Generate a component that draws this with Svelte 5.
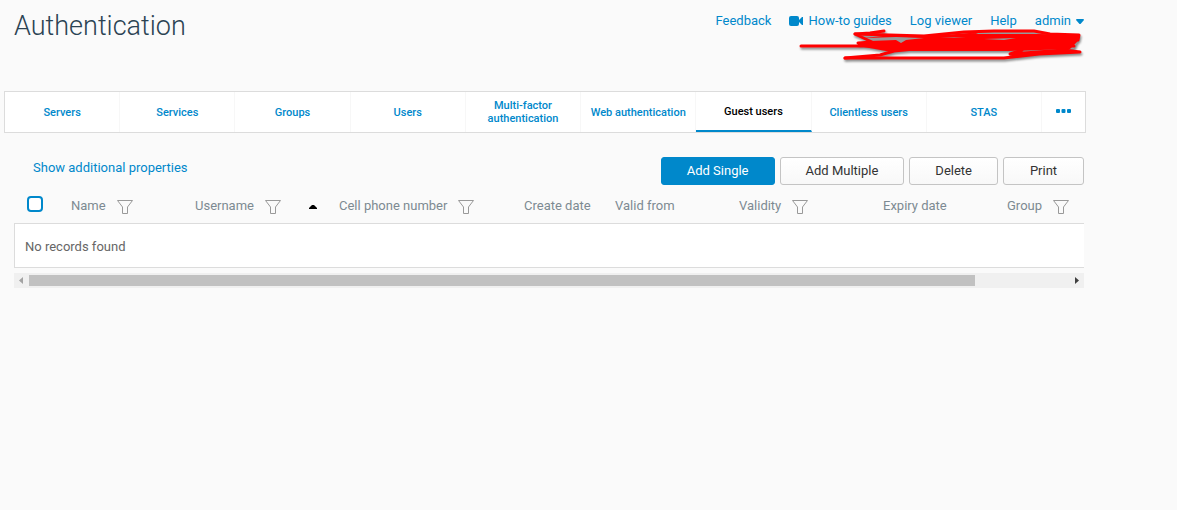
<script>
	const links = ['Feedback', 'How-to guides', 'Log viewer', 'Help'];

	const tabs = [
		'Servers',
		'Services',
		'Groups',
		'Users',
		'Multi-factor authentication',
		'Web authentication',
		'Guest users',
		'Clientless users',
		'STAS'
	];

	const columns = [
		{ label: 'Name', width: '124px', filter: true },
		{ label: 'Username', width: '144px', filter: true, sorted: true },
		{ label: 'Cell phone number', width: '185px', filter: true },
		{ label: 'Create date', width: '91px' },
		{ label: 'Valid from', width: '124px' },
		{ label: 'Validity', width: '144px', filter: true },
		{ label: 'Expiry date', width: '124px' },
		{ label: 'Group', width: 'auto', filter: true }
	];

	let active = $state('Guest users');
	let allChecked = $state(false);
</script>

<div class="page">
	<header>
		<h1>Authentication</h1>
		<div class="account">
			<nav class="links">
				{#each links as link}
					<a href="#top">
						{#if link === 'How-to guides'}
							<svg width="14" height="10" viewBox="0 0 14 10" aria-hidden="true">
								<rect width="10" height="10" rx="2" fill="currentColor" />
								<path d="M9 5L13 1H14V9H13Z" fill="currentColor" />
							</svg>
						{/if}
						{link}
					</a>
				{/each}
				<a href="#top">
					admin
					<svg width="8" height="5" viewBox="0 0 8 5" aria-hidden="true">
						<path d="M0.5 0H7.5L8 1L4.5 5H3.5L0 1Z" fill="currentColor" />
					</svg>
				</a>
			</nav>
			<svg class="redacted" width="290" height="36" viewBox="0 0 290 36" aria-hidden="true">
				<path d="M66 8L100 6L270 6L286 8L280 20L200 22L90 20Z" fill="#999" />
				<path
					d="M98 6H150L175 4L245 5L285 6L284 12L276 20L215 22H92L64 17V14L74 12L70 9Z"
					fill="#f00"
				/>
				<path d="M72 9L102 8L130 9L112 11L107 14L102 11L76 12Z" fill="#999" />
				<path d="M146 9L172 8L160 9Z M180 3L240 3L246 5H184Z M190 10L222 9L210 11Z" fill="#999" />
				<g fill="none" stroke="#f00" stroke-width="3" stroke-linecap="round" stroke-linejoin="round">
					<path d="M7 17H280" />
					<path d="M90 2L76 4L61 5L78 13L64 14" />
					<path d="M61 5L130 7L170 3L200 2L240 2L256 5L285 6L284 11" />
					<path d="M51 29H210L245 25L286 23L270 21L216 25L228 21" />
					<path d="M51 29L86 26L100 22L120 20" />
				</g>
			</svg>
		</div>
	</header>

	<nav class="tabs">
		{#each tabs as tab}
			<button class="tab" class:active={tab === active} onclick={() => (active = tab)}>{tab}</button>
		{/each}
		<button class="more" aria-label="More tabs">
			<svg width="15" height="4" viewBox="0 0 15 4" aria-hidden="true">
				<rect width="4" height="4" rx="1" fill="currentColor" />
				<rect x="5.5" width="4" height="4" rx="1" fill="currentColor" />
				<rect x="11" width="4" height="4" rx="1" fill="currentColor" />
			</svg>
		</button>
	</nav>

	<main>
		<div class="toolbar">
			<a href="#top">Show additional properties</a>
			<div class="actions">
				<button class="primary">Add Single</button>
				<button>Add Multiple</button>
				<button>Delete</button>
				<button>Print</button>
			</div>
		</div>

		<div class="grid">
			<table>
				<thead>
					<tr>
						<th class="check"><input type="checkbox" aria-label="Select all" bind:checked={allChecked} /></th>
						{#each columns as col}
							<th style="width: {col.width}">
								<div class="head">
									{col.label}
									{#if col.filter}
										<svg class="filter" width="16" height="14" viewBox="0 0 16 14" aria-hidden="true">
											<path d="M0.5 0.5H15.5L10.5 7V13.5H5.5V7Z" fill="none" stroke="currentColor" />
										</svg>
									{/if}
									{#if col.sorted}
										<svg class="sort" width="8" height="4" viewBox="0 0 8 4" aria-hidden="true">
											<path d="M0 4V3L3 0H5L8 3V4Z" fill="#000" />
										</svg>
									{/if}
								</div>
							</th>
						{/each}
					</tr>
				</thead>
				<tbody>
					<tr>
						<td colspan={columns.length + 1}>No records found</td>
					</tr>
				</tbody>
			</table>
		</div>

		<div class="scrollbar">
			<svg width="15" height="15" viewBox="0 0 15 15" aria-hidden="true">
				<path d="M9 4V11L5 7.5Z" fill="#a3a3a3" />
			</svg>
			<div class="track"><div class="thumb"></div></div>
			<svg width="15" height="15" viewBox="0 0 15 15" aria-hidden="true">
				<path d="M6 4V11L10 7.5Z" fill="#404040" />
			</svg>
		</div>
	</main>
</div>

<style>
	:global(body) {
		background: #fafafa;
	}
	.page {
		padding: 0 91px 0 4px;
		font-family: Roboto, 'Liberation Sans', sans-serif;
		font-size: 13px;
		line-height: 16px;
		color: #333;
	}
	a {
		color: #0088cb;
		text-decoration: none;
	}
	button {
		font: inherit;
		cursor: pointer;
	}
	header {
		display: flex;
		justify-content: space-between;
		height: 91px;
		padding-left: 10px;
	}
	h1 {
		margin: 10px 0 0;
		font-size: 27px;
		line-height: 32px;
		font-weight: 300;
		color: #2b4353;
	}
	.account {
		display: flex;
		flex-direction: column;
		align-items: flex-end;
		padding: 13px 2px 0 0;
	}
	.links {
		display: flex;
		gap: 18px;
	}
	.links a {
		display: flex;
		align-items: center;
		gap: 5px;
	}
	.redacted {
		filter: drop-shadow(1px 2px 1px rgba(0, 0, 0, 0.45));
	}
	.tabs {
		display: flex;
		height: 40px;
		border: 1px solid #dcdcdc;
		background: #fff;
	}
	.tabs button {
		padding: 0 4px;
		border: 0;
		border-right: 1px solid #f7f7f7;
		background: none;
		color: #0088cb;
		font-size: 11px;
		line-height: 13px;
		font-weight: 500;
	}
	.tabs .tab {
		flex: 1;
		min-width: 0;
	}
	.tabs .active {
		border-bottom: 2px solid #0088cb;
		color: #000;
	}
	.tabs .more {
		display: flex;
		align-items: center;
		justify-content: center;
		width: 43px;
		padding-bottom: 2px;
		border-right: 0;
	}
	main {
		padding: 24px 2px 0 10px;
	}
	.toolbar {
		display: flex;
		justify-content: space-between;
		padding-left: 19px;
	}
	.toolbar a {
		padding-top: 3px;
	}
	.actions {
		display: flex;
		gap: 5px;
	}
	.actions button {
		min-width: 81px;
		height: 28px;
		padding: 0 25px;
		border: 1px solid #c4c4c4;
		border-radius: 3px;
		background: linear-gradient(#fff, #f8f8f8);
		color: #333;
	}
	.actions .primary {
		border-color: #0088cb;
		background: #0088cb;
		color: #fff;
	}
	.grid {
		overflow: hidden;
	}
	table {
		width: 110%;
		min-width: 1163px;
		table-layout: fixed;
		border-collapse: separate;
		border-spacing: 0;
	}
	th {
		height: 38px;
		padding: 0 0 0 10px;
		box-sizing: border-box;
		text-align: left;
		font-weight: 400;
		color: #7d8a92;
	}
	.check {
		width: 47px;
		padding-left: 13px;
	}
	.check input {
		display: block;
		appearance: none;
		box-sizing: border-box;
		width: 16px;
		height: 16px;
		margin: 0;
		border: 2px solid #0088cb;
		border-radius: 4px;
		background: #fff;
	}
	.check input:checked {
		background: #0088cb;
	}
	.head {
		display: flex;
		align-items: flex-end;
		gap: 11px;
		height: 16px;
		padding-top: 3px;
	}
	.filter {
		color: #999;
	}
	.sort {
		margin: 0 12px 5px auto;
	}
	td {
		height: 45px;
		padding: 2px 10px 0;
		box-sizing: border-box;
		border: 1px solid #dcdcdc;
		background: #fff;
		color: #666;
	}
	.scrollbar {
		display: flex;
		height: 15px;
		margin-top: 5px;
		background: #f0f0f0;
	}
	.track {
		flex: 1;
		padding: 2px 0;
	}
	.thumb {
		width: 91%;
		height: 11px;
		background: #c1c1c1;
	}
</style>
